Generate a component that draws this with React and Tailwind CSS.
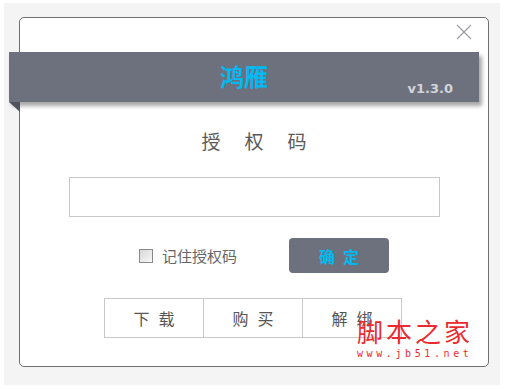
import React from 'react';

const cjk = { fontFamily: '"Noto Sans CJK SC", "Noto Sans", sans-serif' };

const TabButton = ({ label, first }) => (
    <button
        className={`w-[100px] h-[40px] border border-[#c9c9c9] bg-white text-[16px] text-[#555] tracking-[9px] pl-[9px] ${first ? '' : 'ml-[-1px]'}`}
        style={cjk}
    >
        {label}
    </button>
);

const App = () => {
    return (
        <div className="w-[505px] h-[389px] bg-white pt-[3px] pl-[4px]" style={cjk}>
            <div className="w-[496px] h-[382px] bg-[#f4f4f4] pt-[14px] pl-[15px]">
                <div className="relative w-[470px] h-[350px] bg-white border border-[#707070] rounded-[5px]">
                    {/* close */}
                    <div className="flex justify-end pr-[16px] pt-[6px] h-[34px]">
                        <svg width="16" height="16" viewBox="0 0 16 16">
                            <path d="M1 1 L15 15 M15 1 L1 15" stroke="#9a9ea6" strokeWidth="1.2" fill="none" />
                        </svg>
                    </div>

                    {/* banner */}
                    <div className="relative ml-[-11px] w-[470px] h-[50px] bg-[#6d717d] shadow-[3px_4px_4px_rgba(0,0,0,0.35)] flex items-center justify-center">
                        <span className="text-[24px] font-bold text-[#00b9f0] leading-none mt-[-2px]">鸿雁</span>
                        <span
                            className="absolute right-[26px] bottom-[7px] text-[13px] font-bold text-[#d2d4d8] leading-none"
                            style={{ fontFamily: '"DejaVu Sans", sans-serif' }}
                        >
                            v1.3.0
                        </span>
                        <svg className="absolute left-0 top-[50px]" width="11" height="10" viewBox="0 0 11 10">
                            <polygon points="0,0 11,0 11,10" fill="#4f535d" />
                        </svg>
                    </div>

                    {/* heading */}
                    <div className="flex justify-center gap-[24px] mt-[29px] text-[19px] text-[#5a5a5a] leading-none">
                        <span>授</span>
                        <span>权</span>
                        <span>码</span>
                    </div>

                    {/* input */}
                    <div className="ml-[49px] mt-[27px] w-[371px] h-[40px] border border-[#c9c9c9] bg-white" />

                    {/* checkbox + confirm */}
                    <div className="flex items-center mt-[21px]">
                        <div className="ml-[119px] w-[14px] h-[14px] border border-[#8a8a8a] bg-gradient-to-br from-[#d8d8d8] to-[#f8f8f8]" />
                        <span className="ml-[9px] text-[15px] text-[#666] leading-none">记住授权码</span>
                        <button className="ml-[52px] w-[100px] h-[35px] rounded-[4px] bg-[#6d717d] text-[16px] font-bold text-[#00b9f0] tracking-[8px] pl-[8px]">
                            确定
                        </button>
                    </div>

                    {/* tabs */}
                    <div className="flex ml-[84px] mt-[25px]">
                        <TabButton label="下载" first />
                        <TabButton label="购买" />
                        <TabButton label="解绑" />
                    </div>

                    {/* watermark */}
                    <div className="absolute left-[337px] top-[300px] flex flex-col items-start pointer-events-none">
                        <span className="text-[26px] text-[#ea2a2f] tracking-[3px] leading-none">脚本之家</span>
                        <span
                            className="mt-[5px] text-[10px] text-[#ea2a2f] tracking-[3.6px] leading-none"
                            style={{ fontFamily: '"DejaVu Sans Mono", monospace' }}
                        >
                            www.jb51.net
                        </span>
                    </div>
                </div>
            </div>
        </div>
    );
};

export default App;
